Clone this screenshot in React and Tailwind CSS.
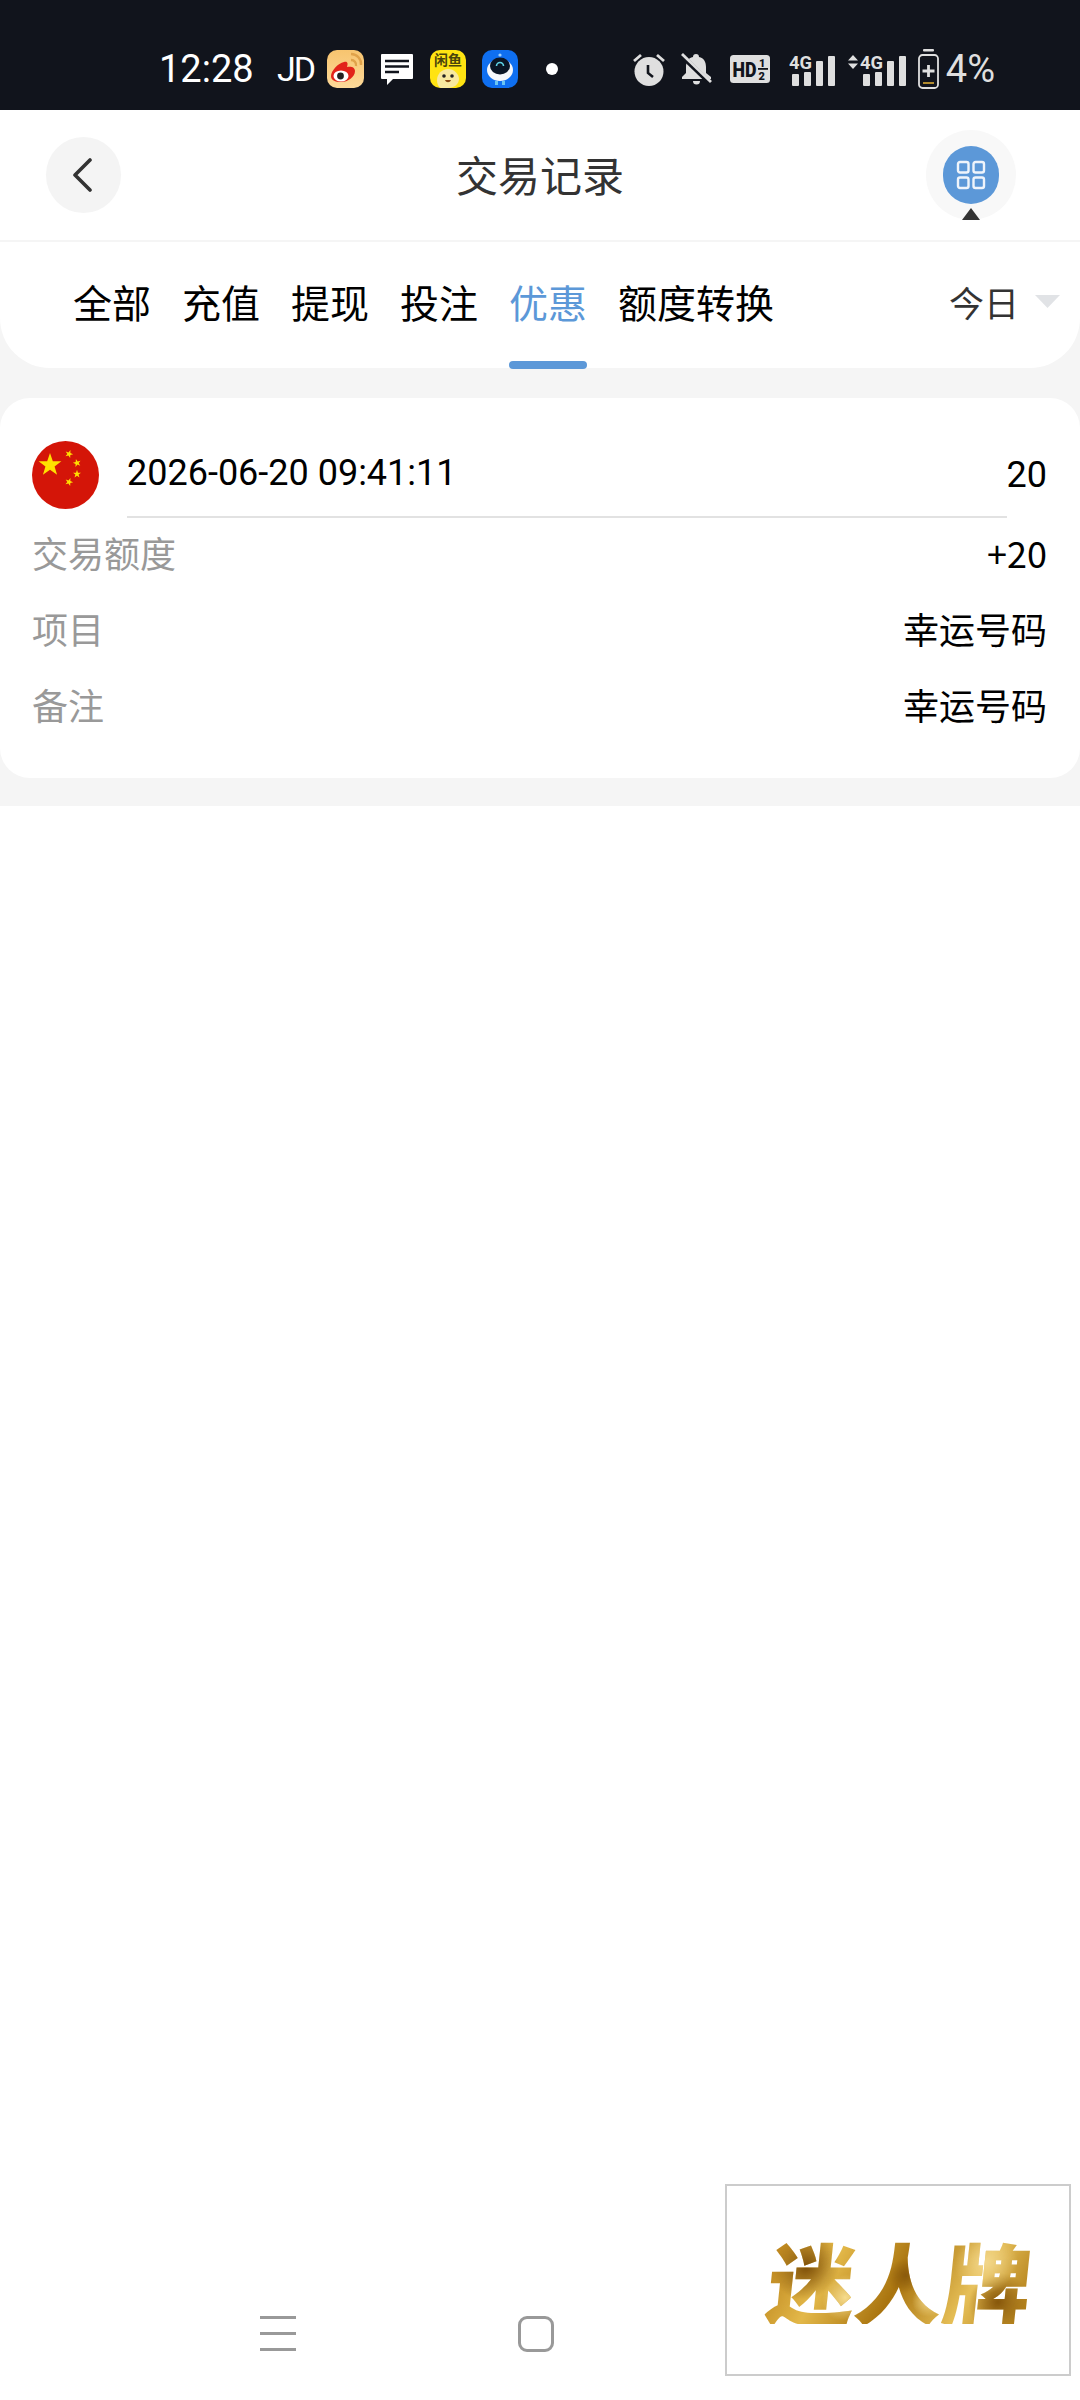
const CJK = { fontFamily: '"Noto Sans CJK SC", "Noto Sans", sans-serif' };
const ROBOTO = { fontFamily: 'Roboto, sans-serif' };

const tabs = ['全部', '充值', '提现', '投注', '优惠', '额度转换'];

const rows = [
  { label: '交易额度', value: '+20' },
  { label: '项目', value: '幸运号码' },
  { label: '备注', value: '幸运号码' },
];

const WeiboIcon = () => (
  <svg width="37" height="38" viewBox="0 0 37 38">
    <defs>
      <linearGradient id="wb" x1="0" y1="0" x2="0" y2="1">
        <stop offset="0" stopColor="#f7c46f" />
        <stop offset="1" stopColor="#fdd999" />
      </linearGradient>
    </defs>
    <rect width="37" height="38" rx="10" fill="url(#wb)" />
    <path d="M24 4a10 10 0 0 1 10 11M24 10a5 5 0 0 1 5 6" stroke="#e0a24a" strokeWidth="2.4" fill="none" />
    <path d="M4 26c0-5 7-13 13-14 4-1 4 2 3 5 4-1 8 0 8 4 0 6-7 11-14 11-6 0-10-2-10-6z" fill="#e2231a" />
    <ellipse cx="14" cy="26" rx="7.5" ry="5.5" fill="#fff" />
    <circle cx="13.5" cy="26" r="3.4" fill="#222" />
  </svg>
);

const ChatIcon = () => (
  <svg width="34" height="32" viewBox="0 0 34 32">
    <path d="M2 1h30a1 1 0 0 1 1 1v23a1 1 0 0 1-1 1H13l-6 6v-6H2a1 1 0 0 1-1-1V2a1 1 0 0 1 1-1z" fill="#fff" />
    <path d="M5 8h24M5 13.5h24M5 19h14" stroke="#11141c" strokeWidth="2.6" />
  </svg>
);

const XianyuIcon = () => (
  <svg width="36" height="38" viewBox="0 0 36 38">
    <rect width="36" height="38" rx="10" fill="#ffe312" />
    <text x="18" y="15" textAnchor="middle" fontSize="14" fontWeight="700" fill="#4a430c" style={CJK}>闲鱼</text>
    <path d="M7 30c0-6 5-11 11-11s11 5 11 10-5 9-11 9h-7c-3-1-4-5-4-8z" fill="#f8e9a0" />
    <circle cx="14" cy="26" r="1.8" fill="#222" />
    <circle cx="22" cy="26" r="1.8" fill="#222" />
    <path d="M15 30c1 3 5 3 6 0z" fill="#8a4a12" />
  </svg>
);

const RobotIcon = () => (
  <svg width="36" height="38" viewBox="0 0 36 38">
    <rect width="36" height="38" rx="10" fill="#0f6ff0" />
    <ellipse cx="18" cy="20" rx="13" ry="11" fill="#f4f7fb" />
    <ellipse cx="18" cy="16" rx="10" ry="8.5" fill="#0a1626" />
    <path d="M14.5 16a3.5 3.5 0 0 1 7 0" stroke="#5ed3e6" strokeWidth="1.6" fill="none" />
    <rect x="13" y="31" width="3" height="4" fill="#6bc6f2" />
    <rect x="20" y="31" width="3" height="4" fill="#6bc6f2" />
    <circle cx="18" cy="5" r="1.6" fill="#9fd2ff" />
  </svg>
);

const AlarmIcon = () => (
  <svg width="32" height="34" viewBox="0 0 32 34">
    <circle cx="16" cy="19.5" r="14.5" fill="#dfdfdf" />
    <path d="M1 9l7-6M31 9l-7-6" stroke="#dfdfdf" strokeWidth="2.8" />
    <path d="M15 13v8l5 4" stroke="#11141c" strokeWidth="2.6" fill="none" />
  </svg>
);

const BellOffIcon = () => (
  <svg width="31" height="32" viewBox="0 0 31 32">
    <path d="M15 1a3 3 0 0 1 3 3c5 1 7 5 7 10v6l5 4v2H1v-2l4-4v-6c0-5 2-9 7-10a3 3 0 0 1 3-3z" fill="#dfdfdf" />
    <path d="M12 28h7a3.5 3.5 0 0 1-7 0z" fill="#dfdfdf" />
    <path d="M0 2l29 28" stroke="#11141c" strokeWidth="5" />
    <path d="M1 1l29 28" stroke="#dfdfdf" strokeWidth="2.8" />
  </svg>
);

const HdIcon = () => (
  <svg width="40" height="28" viewBox="0 0 40 28">
    <rect width="40" height="28" rx="3.5" fill="#dfdfdf" />
    <text x="2.5" y="22" fontSize="21" fontWeight="900" fill="#11141c" textLength="24" lengthAdjust="spacingAndGlyphs" style={ROBOTO}>HD</text>
    <text x="29" y="12" fontSize="11" fontWeight="900" fill="#11141c" style={ROBOTO}>1</text>
    <rect x="28" y="13" width="10" height="1.8" fill="#11141c" />
    <text x="28.5" y="25" fontSize="11" fontWeight="900" fill="#11141c" style={ROBOTO}>2</text>
  </svg>
);

const SignalIcon = () => (
  <svg width="46" height="34" viewBox="0 0 46 34">
    <text x="0" y="17" fontSize="19" fontWeight="700" fill="#dfdfdf" textLength="23" lengthAdjust="spacingAndGlyphs" style={ROBOTO}>4G</text>
    <rect x="3" y="22" width="7" height="12" rx="1" fill="#dfdfdf" />
    <rect x="15" y="20" width="7" height="14" rx="1" fill="#dfdfdf" />
    <rect x="27" y="9" width="7" height="25" rx="1" fill="#dfdfdf" />
    <rect x="39" y="4" width="7" height="30" rx="1" fill="#dfdfdf" />
  </svg>
);

const TransferArrows = () => (
  <svg width="14" height="34" viewBox="0 0 14 34">
    <path d="M5 3l5 5.5H0zM5 17l5-5.5H0z" fill="#dfdfdf" />
  </svg>
);

const BatteryIcon = () => (
  <svg width="21" height="40" viewBox="0 0 21 40">
    <rect x="5" y="0" width="11" height="2.4" rx="1" fill="#dfdfdf" />
    <rect x="1" y="6" width="19" height="33" rx="3.5" fill="none" stroke="#dfdfdf" strokeWidth="1.8" />
    <path d="M10.5 16v12M4.5 22h12" stroke="#dfdfdf" strokeWidth="2.8" />
    <rect x="5" y="33" width="11" height="2" fill="#b08a2e" />
  </svg>
);

const FlagIcon = () => (
  <svg width="67" height="68" viewBox="0 0 67 68">
    <defs>
      <path id="star" d="M0-10L2.35-3.1 9.5-3.1 3.8 1.2 5.9 8.1 0 4 -5.9 8.1 -3.8 1.2 -9.5-3.1 -2.35-3.1z" fill="#ffe000" />
    </defs>
    <ellipse cx="33.5" cy="34" rx="33.5" ry="34" fill="#d41508" />
    <use href="#star" transform="translate(18 24) scale(1.2)" />
    <use href="#star" transform="translate(37 13) scale(0.42) rotate(20)" />
    <use href="#star" transform="translate(45 22) scale(0.42) rotate(-15)" />
    <use href="#star" transform="translate(45 33) scale(0.42)" />
    <use href="#star" transform="translate(37 41) scale(0.42) rotate(20)" />
  </svg>
);

const StatusBar = () => (
  <div className="h-[110px] bg-[#11141c] flex items-center pt-[28px] pl-[159px] pr-[85px] text-white">
    <span className="text-[38px] w-[118px] leading-none" style={ROBOTO}>12:28</span>
    <span className="text-[34px] w-[50px] leading-none tracking-[-2px]" style={ROBOTO}>JD</span>
    <div className="flex items-center gap-[16px]">
      <WeiboIcon />
      <ChatIcon />
      <XianyuIcon />
      <RobotIcon />
    </div>
    <span className="ml-[28px] w-[12px] h-[12px] rounded-full bg-white" />
    <div className="ml-auto flex items-center text-[#dfdfdf]">
      <AlarmIcon />
      <div className="ml-[16px]"><BellOffIcon /></div>
      <div className="ml-[18px]"><HdIcon /></div>
      <div className="ml-[19px]"><SignalIcon /></div>
      <div className="ml-[13px]"><TransferArrows /></div>
      <div className="-ml-[2px]"><SignalIcon /></div>
      <div className="ml-[12px]"><BatteryIcon /></div>
      <span className="ml-[7px] text-[38px] leading-none" style={ROBOTO}>4%</span>
    </div>
  </div>
);

const Header = () => (
  <div className="h-[130px] bg-white flex items-center pl-[46px] pr-[64px]">
    <div className="flex-1">
      <div className="w-[75px] h-[76px] rounded-full bg-[#f4f4f4] flex items-center justify-center">
        <svg width="20" height="34" viewBox="0 0 20 34" className="mr-[3px]">
          <path d="M18 2L3 17l15 15" fill="none" stroke="#333" strokeWidth="3.6" strokeLinecap="round" strokeLinejoin="round" />
        </svg>
      </div>
    </div>
    <h1 className="text-[42px] text-[#333] leading-none -mt-[2px] ml-[18px]" style={CJK}>交易记录</h1>
    <div className="flex-1 flex justify-end">
      <div className="relative w-[90px] h-[90px] rounded-full bg-[#f8f8f8] flex items-center justify-center">
        <div className="w-[56px] h-[58px] rounded-full bg-[#5c98d8] flex items-center justify-center">
          <svg width="30" height="30" viewBox="0 0 30 30" fill="none" stroke="#fff" strokeWidth="2.4" opacity="0.9">
            <rect x="2" y="2" width="10.5" height="10.5" rx="2" />
            <rect x="17.5" y="2" width="10.5" height="10.5" rx="2" />
            <rect x="2" y="17.5" width="10.5" height="10.5" rx="2" />
            <rect x="17.5" y="17.5" width="10.5" height="10.5" rx="2" />
          </svg>
        </div>
        <svg width="18" height="12" viewBox="0 0 18 12" className="absolute left-[36px] top-[78px]">
          <path d="M9 0l9 12H0z" fill="#333" />
        </svg>
      </div>
    </div>
  </div>
);

const Tabs = () => (
  <div className="h-[126px] bg-white rounded-b-[50px] flex items-stretch pl-[73px] pr-[20px]" style={CJK}>
    <div className="flex gap-[31px]">
      {tabs.map((tab) => (
        <div key={tab} className="relative flex items-center pb-[8px]">
          <span className={`text-[39px] leading-none whitespace-nowrap ${tab === '优惠' ? 'text-[#5c98d8]' : 'text-black'}`}>{tab}</span>
          {tab === '优惠' && <span className="absolute left-0 right-0 -bottom-px h-[8px] rounded-full bg-[#5c98d8]" />}
        </div>
      ))}
    </div>
    <div className="ml-auto flex items-center pb-[8px]">
      <span className="text-[35px] leading-none text-[#333]">今日</span>
      <svg width="25" height="13" viewBox="0 0 25 13" className="ml-[16px]">
        <path d="M0 0h25L12.5 13z" fill="#e1e3e6" />
      </svg>
    </div>
  </div>
);

const RecordCard = () => (
  <div className="bg-white rounded-[30px] h-[380px] pt-[43px] pl-[32px] pr-[33px]" style={CJK}>
    <div className="flex">
      <div className="w-[95px]"><FlagIcon /></div>
      <div className="flex-1 h-[77px] relative flex justify-between items-start pt-[11px]">
        <span className="text-[36px] leading-[42px] text-black" style={ROBOTO}>2026-06-20 09:41:11</span>
        <span className="text-[36px] leading-[42px] text-black mt-[2px]" style={ROBOTO}>20</span>
        <span className="absolute left-0 right-[40px] bottom-0 h-[2px] bg-[#e2e2e2]" />
      </div>
    </div>
    <div className="flex flex-col gap-[26px] mt-[9px]">
      {rows.map((row) => (
        <div key={row.label} className="flex justify-between items-center h-[50px] text-[36px] leading-none">
          <span className="text-[#999]">{row.label}</span>
          <span className="text-black">{row.value}</span>
        </div>
      ))}
    </div>
  </div>
);

const BottomNav = () => (
  <div className="relative h-[216px] bg-white">
    <div className="absolute left-[260px] top-[132px] flex flex-col gap-[13px]">
      <span className="w-[36px] h-[3px] bg-[#999]" />
      <span className="w-[36px] h-[3px] bg-[#999]" />
      <span className="w-[36px] h-[3px] bg-[#999]" />
    </div>
    <div className="absolute left-[518px] top-[132px] w-[36px] h-[36px] rounded-[9px] border-[3px] border-[#999]" />
    <div className="absolute left-[725px] top-0 w-[346px] h-[192px] bg-white border-2 border-[#cccccc] flex items-center justify-center">
      <span
        className="inline-block ml-[5px] -skew-x-6 text-[88px] leading-none font-black text-transparent bg-clip-text bg-[radial-gradient(circle_at_14%_35%,#7d4f08_0,transparent_14%),radial-gradient(circle_at_30%_70%,#f6dc8e_0,transparent_12%),radial-gradient(circle_at_52%_45%,#8a5a0c_0,transparent_12%),radial-gradient(circle_at_62%_72%,#f3d98c_0,transparent_10%),radial-gradient(circle_at_82%_30%,#f2d68a_0,transparent_14%),radial-gradient(circle_at_88%_75%,#86560a_0,transparent_12%),linear-gradient(115deg,#b67d16_0%,#e3b849_25%,#a9740f_50%,#e6bf57_75%,#a9740f_100%)]"
        style={CJK}
      >
        迷人牌
      </span>
    </div>
  </div>
);

export default function App() {
  return (
    <div className="w-[1080px] h-[2400px] flex flex-col bg-white overflow-hidden">
      <StatusBar />
      <Header />
      <div className="h-[2px] bg-[#f5f5f5]" />
      <div className="bg-[#f5f5f5] pb-[28px]">
        <Tabs />
        <div className="mt-[30px]">
          <RecordCard />
        </div>
      </div>
      <div className="flex-1" />
      <BottomNav />
    </div>
  );
}
